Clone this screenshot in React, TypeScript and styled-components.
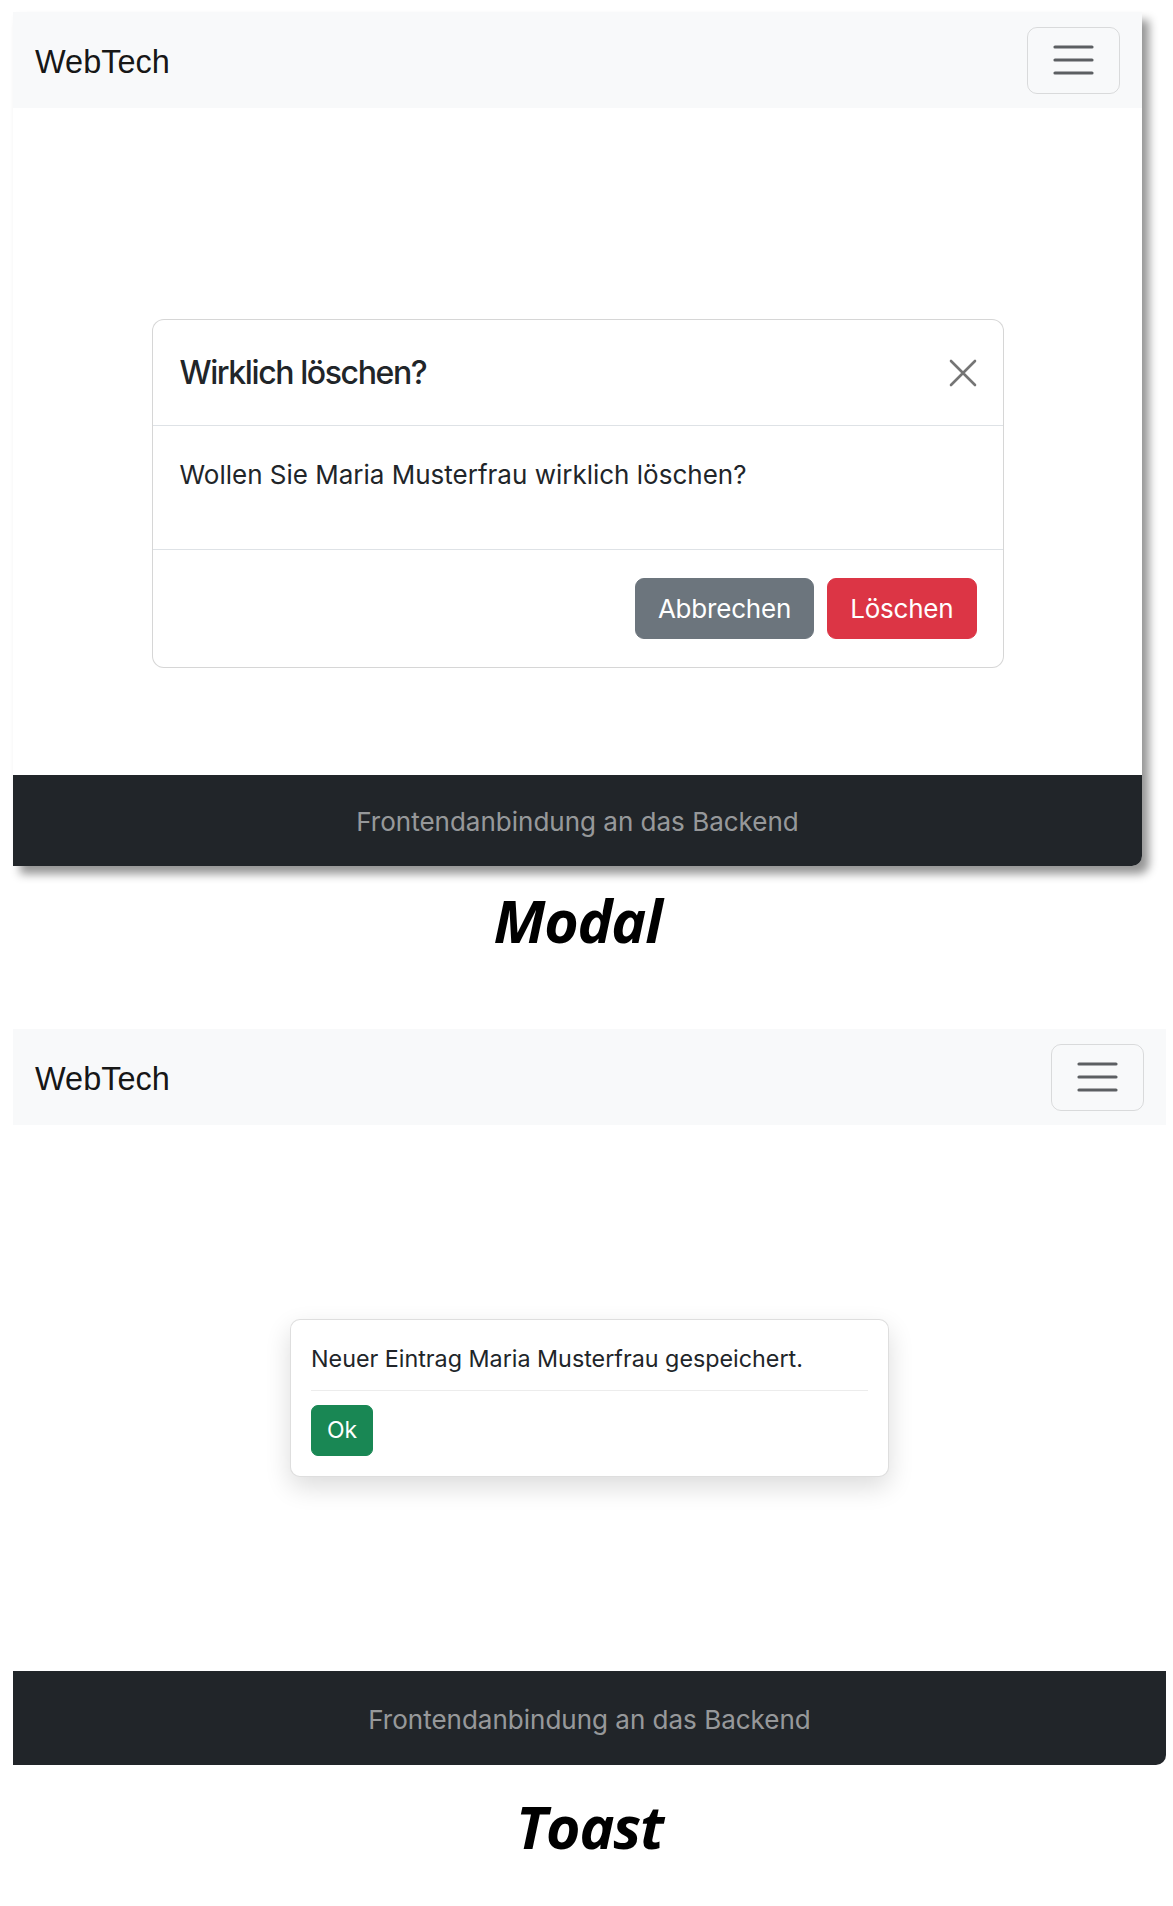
import React from "react";
import styled, { createGlobalStyle } from "styled-components";

const GlobalStyle = createGlobalStyle`
  html, body {
    margin: 0;
    padding: 0;
    background: #ffffff;
  }
  body {
    font-family: Inter, "Noto Sans", "Liberation Sans", sans-serif;
    color: #212529;
  }
  * { box-sizing: border-box; }
`;

const Page = styled.div`
  display: flex;
  flex-direction: column;
  gap: 80px;
  padding: 12px 0 0 13px;
`;

const Section = styled.section<{ $width: number }>`
  display: flex;
  flex-direction: column;
  width: ${(p) => p.$width}px;
`;

const Panel = styled.div<{ $shadow?: boolean }>`
  display: flex;
  flex-direction: column;
  background: #ffffff;
  border-bottom-right-radius: 10px;
  overflow: hidden;
  box-shadow: ${(p) => (p.$shadow ? "7px 8px 10px rgba(0, 0, 0, 0.42)" : "none")};
`;

const Navbar = styled.nav`
  height: 96px;
  background: #f8f9fa;
  display: flex;
  align-items: center;
  justify-content: space-between;
  padding: 0 22px 0 22px;
`;

const Brand = styled.a`
  font-family: "Liberation Sans", Arial, sans-serif;
  font-size: 32.5px;
  line-height: 48px;
  padding-top: 4px;
  color: rgba(0, 0, 0, 0.92);
  text-decoration: none;
`;

const Toggler = styled.button`
  width: 93px;
  height: 67px;
  border: 1px solid rgba(0, 0, 0, 0.12);
  border-radius: 10px;
  background: transparent;
  display: flex;
  align-items: center;
  justify-content: center;
  padding: 0;
`;

const Content = styled.main<{ $height: number; $top?: number }>`
  height: ${(p) => p.$height}px;
  display: flex;
  justify-content: center;
  align-items: ${(p) => (p.$top !== undefined ? "flex-start" : "center")};
  padding-top: ${(p) => p.$top ?? 0}px;
`;

const ModalBox = styled.div`
  width: 852px;
  border: 1px solid rgba(0, 0, 0, 0.16);
  border-radius: 12px;
  background: #fff;
  display: flex;
  flex-direction: column;
`;

const ModalHeader = styled.div`
  height: 106px;
  border-bottom: 1px solid #dee2e6;
  display: flex;
  align-items: center;
  justify-content: space-between;
  padding: 0 26px 0 27px;
`;

const ModalTitle = styled.h5`
  margin: 0;
  font-size: 32px;
  font-weight: 550;
  letter-spacing: -1.4px;
  line-height: 1.5;
  color: #212529;
`;

const CloseButton = styled.button`
  width: 28px;
  height: 28px;
  border: 0;
  padding: 0;
  background: transparent;
  display: flex;
  margin-top: 1px;
`;

const ModalBody = styled.div`
  height: 124px;
  border-bottom: 1px solid #dee2e6;
  padding: 29px 27px 0;
  font-size: 26px;
  line-height: 40px;
  color: #212529;
`;

const ModalFooter = styled.div`
  height: 117px;
  display: flex;
  align-items: center;
  justify-content: flex-end;
  gap: 13px;
  padding: 0 26px;
`;

const Button = styled.button<{ $bg: string; $h: number; $px: number; $fs: number; $r: number }>`
  height: ${(p) => p.$h}px;
  padding: 0 ${(p) => p.$px}px;
  background: ${(p) => p.$bg};
  color: #ffffff;
  border: 1px solid ${(p) => p.$bg};
  border-radius: ${(p) => p.$r}px;
  font-family: Inter, "Noto Sans", sans-serif;
  font-size: ${(p) => p.$fs}px;
  letter-spacing: -0.2px;
  line-height: 1;
  display: flex;
  align-items: center;
`;

const Footer = styled.footer<{ $height: number }>`
  height: ${(p) => p.$height}px;
  background: #212529;
  display: flex;
  align-items: center;
  justify-content: center;
  color: rgba(255, 255, 255, 0.55);
  font-size: 26px;
  padding-top: 2px;
`;

const Caption = styled.h2<{ $top: number }>`
  margin: ${(p) => p.$top}px 0 0;
  text-align: center;
  font-family: "Open Sans", "Noto Sans", sans-serif;
  font-weight: 700;
  font-style: italic;
  font-size: 59px;
  line-height: 57px;
  color: #000;
  letter-spacing: -1.2px;
`;

const Toast = styled.div`
  width: 599px;
  background: #fff;
  border: 1px solid rgba(0, 0, 0, 0.13);
  border-radius: 10px;
  box-shadow: 0 10px 26px rgba(0, 0, 0, 0.14);
  padding: 22px 20px 20px;
  display: flex;
  flex-direction: column;
  align-items: flex-start;
`;

const ToastText = styled.div`
  font-size: 23.3px;
  line-height: 34px;
  color: #212529;
  align-self: stretch;
  padding-bottom: 14px;
  border-bottom: 1px solid #ececec;
  margin-bottom: 14px;
`;

const HamburgerIcon = () => (
  <svg width="41" height="30" viewBox="0 0 41 30" aria-hidden="true">
    <g stroke="#5c5f62" strokeWidth="3.2" strokeLinecap="round">
      <path d="M2 2h37M2 15h37M2 28h37" />
    </g>
  </svg>
);

const CloseIcon = () => (
  <svg width="28" height="28" viewBox="0 0 28 28" aria-hidden="true">
    <g stroke="#757575" strokeWidth="2.6" strokeLinecap="round">
      <path d="M2 2L26 26M26 2L2 26" />
    </g>
  </svg>
);

const NavBar = () => (
  <Navbar>
    <Brand href="#">WebTech</Brand>
    <Toggler aria-label="Toggle navigation">
      <HamburgerIcon />
    </Toggler>
  </Navbar>
);

export default function App() {
  return (
    <>
      <GlobalStyle />
      <Page>
        <Section $width={1129}>
          <Panel $shadow>
            <NavBar />
            <Content $height={667} $top={211}>
              <ModalBox>
                <ModalHeader>
                  <ModalTitle>Wirklich löschen?</ModalTitle>
                  <CloseButton aria-label="Close">
                    <CloseIcon />
                  </CloseButton>
                </ModalHeader>
                <ModalBody>Wollen Sie Maria Musterfrau wirklich löschen?</ModalBody>
                <ModalFooter>
                  <Button $bg="#6c757d" $h={61} $px={22} $fs={26} $r={9}>
                    Abbrechen
                  </Button>
                  <Button $bg="#dc3545" $h={61} $px={22} $fs={26} $r={9}>
                    Löschen
                  </Button>
                </ModalFooter>
              </ModalBox>
            </Content>
            <Footer $height={91}>Frontendanbindung an das Backend</Footer>
          </Panel>
          <Caption $top={26}>Modal</Caption>
        </Section>

        <Section $width={1153}>
          <Panel>
            <NavBar />
            <Content $height={546}>
              <Toast>
                <ToastText>Neuer Eintrag Maria Musterfrau gespeichert.</ToastText>
                <Button $bg="#198754" $h={51} $px={15} $fs={23} $r={7}>
                  Ok
                </Button>
              </Toast>
            </Content>
            <Footer $height={94}>Frontendanbindung an das Backend</Footer>
          </Panel>
          <Caption $top={33}>Toast</Caption>
        </Section>
      </Page>
    </>
  );
}
